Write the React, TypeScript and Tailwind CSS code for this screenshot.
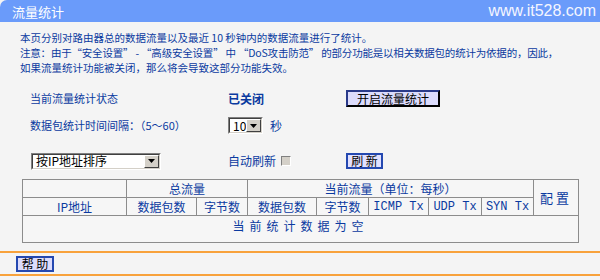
const cjk = "font-['Noto_Sans_CJK_SC','DejaVu_Sans',sans-serif]";

const Select = ({ value, width }: { value: string; width: string }) => (
  <div className={`flex h-[17px] ${width} border border-t-[#808080] border-l-[#808080] border-b-white border-r-white bg-white`}>
    <div className="flex flex-1 items-center overflow-hidden border border-t-[#404040] border-l-[#404040] border-b-[#d4d0c8] border-r-[#d4d0c8] pl-[3px] text-[12px] leading-none text-black">
      {value}
      <div className="ml-auto flex h-full w-[15px] shrink-0 items-center justify-center border border-t-white border-l-white border-b-[#404040] border-r-[#404040] bg-[#d4d0c8]">
        <svg width="7" height="4" viewBox="0 0 7 4">
          <path d="M0 0h7L3.5 4z" fill="#000" />
        </svg>
      </div>
    </div>
  </div>
);

const th = "border border-[#8c8c8c] text-center font-normal text-[#0a3aa0] text-[12px] leading-none";
const mono = "font-['Liberation_Mono',monospace] font-bold text-[11px]";

export default function App() {
  return (
    <div className={`h-[280px] w-[600px] overflow-hidden bg-[#f4f4f4] ${cjk}`}>
      <div className="flex h-[22px] items-center justify-between rounded-tl-[7px] bg-[#6a9bfa] pl-[12px] pr-[4px]">
        <span className="text-[13px] leading-none text-white">流量统计</span>
        <span className="font-['Liberation_Sans',sans-serif] text-[16px] leading-none text-[#f4f6ff]">www.it528.com</span>
      </div>

      <div className="pl-[20px] pt-[8px] text-[10.5px] leading-[15px] text-[#0a3aa0]">
        <p>本页分别对路由器总的数据流量以及最近 10 秒钟内的数据流量进行了统计。</p>
        <p className="tracking-[-0.2px]">注意：由于“安全设置” - “高级安全设置” 中 “DoS攻击防范” 的部分功能是以相关数据包的统计为依据的，因此，</p>
        <p>如果流量统计功能被关闭，那么将会导致这部分功能失效。</p>
      </div>

      <div className="mt-[15px] flex h-[17px] items-center pl-[30px] text-[11px] text-[#0a3aa0]">
        <span className="w-[198px]">当前流量统计状态</span>
        <span className="w-[118px] font-bold text-[12px]">已关闭</span>
        <button className="flex h-[17px] w-[94px] items-center justify-center border-2 border-t-[#2a3a8a] border-l-[#2a3a8a] border-b-black border-r-black bg-[#dcdcfc] text-[12px] leading-none text-black">
          开启流量统计
        </button>
      </div>

      <div className="mt-[10px] flex h-[17px] items-center pl-[30px] text-[11px] text-[#0a3aa0]">
        <span className="w-[198px]">数据包统计时间间隔：（5～60）</span>
        <Select value="10" width="w-[35px]" />
        <span className="ml-[7px] text-[12px]">秒</span>
      </div>

      <div className="mt-[19px] flex h-[16px] items-center pl-[31px] text-[11px] text-[#0a3aa0]">
        <div className="w-[197px]">
          <Select value="按IP地址排序" width="w-[130px]" />
        </div>
        <span className="w-[53px] text-[12px]">自动刷新</span>
        <div className="h-[10px] w-[10px] border border-t-[#808080] border-l-[#808080] border-b-white border-r-white bg-[#d4d0c8]" />
        <button className="ml-[55px] flex h-[16px] w-[37px] items-center justify-center border-2 border-[#2448b0] bg-[#e0e0ff] text-[12px] leading-none text-black">
          刷 新
        </button>
      </div>

      <table className="ml-[22px] mt-[10px] w-[556px] table-fixed border-collapse border border-[#8c8c8c] bg-[#f6f6f6]">
        <colgroup>
          <col className="w-[104px]" />
          <col className="w-[70px]" />
          <col className="w-[51px]" />
          <col className="w-[69px]" />
          <col className="w-[52px]" />
          <col className="w-[60px]" />
          <col className="w-[53px]" />
          <col className="w-[52px]" />
          <col className="w-[45px]" />
        </colgroup>
        <thead>
          <tr className="h-[18px]">
            <th className={th}></th>
            <th className={th} colSpan={2}>总流量</th>
            <th className={th} colSpan={5}>当前流量（单位：每秒）</th>
            <th className={`${th} text-[13px] tracking-[3px]`} rowSpan={2}>配置</th>
          </tr>
          <tr className="h-[18px]">
            <th className={th}>IP地址</th>
            <th className={th}>数据包数</th>
            <th className={th}>字节数</th>
            <th className={th}>数据包数</th>
            <th className={th}>字节数</th>
            <th className={`${th} ${mono}`}>ICMP Tx</th>
            <th className={`${th} ${mono}`}>UDP Tx</th>
            <th className={`${th} ${mono}`}>SYN Tx</th>
          </tr>
        </thead>
        <tbody>
          <tr className="h-[27px]">
            <td colSpan={9} className="border border-[#8c8c8c] pb-[6px] text-center text-[12px] leading-none tracking-[5px] text-[#0a3aa0]">
              当前统计数据为空
            </td>
          </tr>
        </tbody>
      </table>

      <div className="mt-[8px] h-[2px] bg-[#f8a23c]" />
      <div className="flex h-[21px] items-center pl-[16px]">
        <button className="flex h-[16px] w-[38px] items-center justify-center border-2 border-[#2448b0] bg-[#dcdcfc] text-[12px] leading-none text-black">
          帮 助
        </button>
      </div>
      <div className="h-[2px] bg-[#f8a23c]" />
    </div>
  );
}
